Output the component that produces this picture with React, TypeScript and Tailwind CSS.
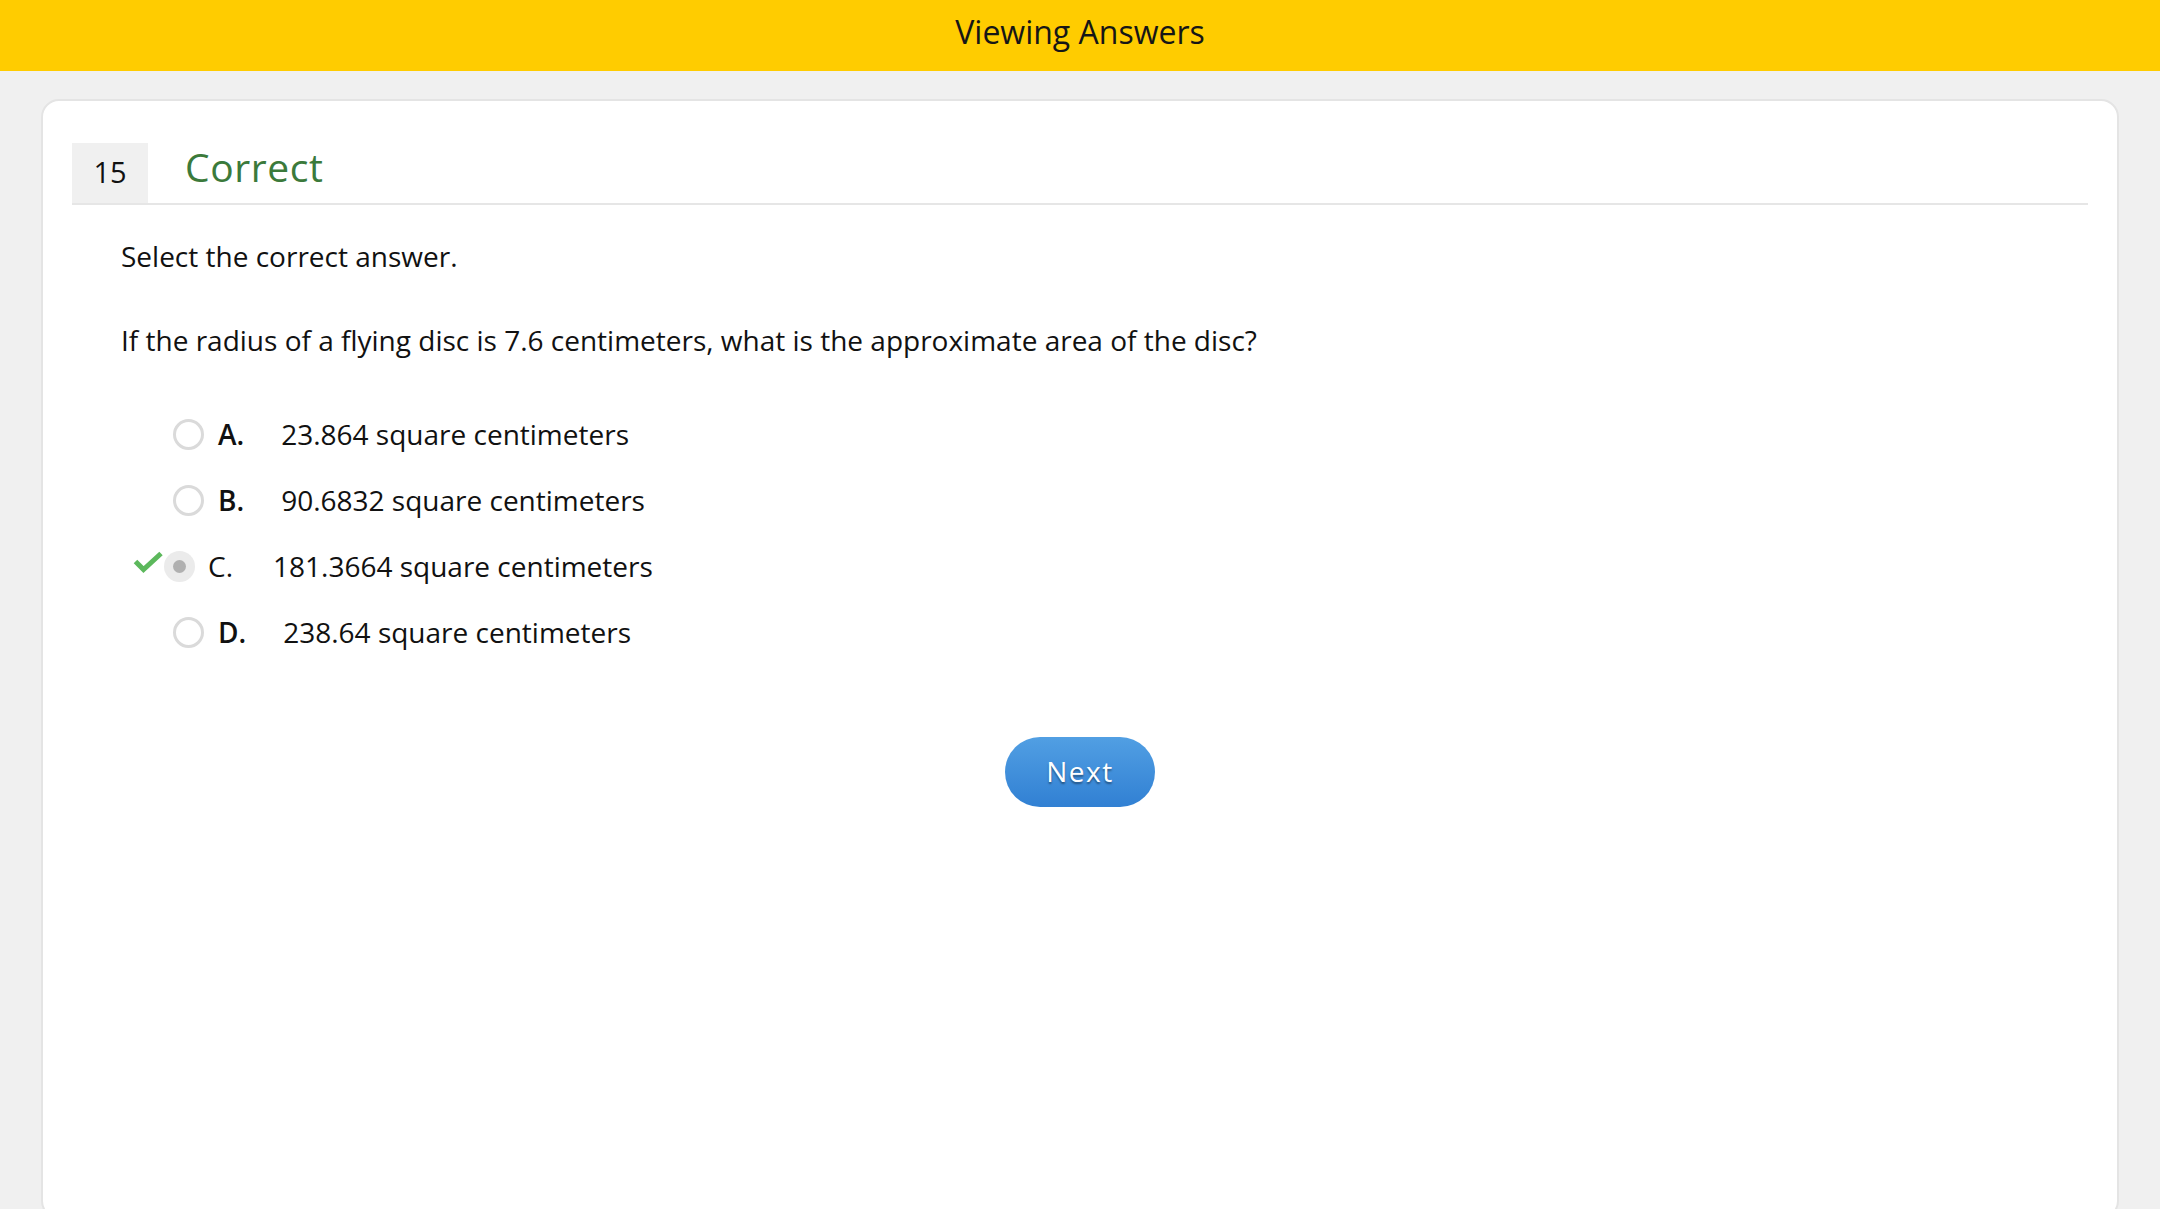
import React from "react";

const options = [
  { key: "A", text: "23.864 square centimeters", selected: false },
  { key: "B", text: "90.6832 square centimeters", selected: false },
  { key: "C", text: "181.3664 square centimeters", selected: true },
  { key: "D", text: "238.64 square centimeters", selected: false },
];

function Check() {
  return (
    <svg width="30" height="22" viewBox="0 0 30 22" className="shrink-0">
      <polyline
        points="2.5,10.5 10.5,18.5 28,2.5"
        fill="none"
        stroke="#5cb85c"
        strokeWidth="5"
        strokeLinecap="butt"
        strokeLinejoin="miter"
      />
    </svg>
  );
}

export default function App() {
  return (
    <div
      className="h-[1209px] overflow-hidden bg-[#f0f0f0] text-[#111]"
      style={{ fontFamily: '"Open Sans", "Noto Sans", sans-serif' }}
    >
      <div className="flex h-[71px] items-center justify-center bg-[#ffcc00] pb-[8px] text-[32px] text-[#161616]">
        Viewing Answers
      </div>

      <div className="mx-[41px] mt-[28px] h-[1120px] rounded-[18px] border-2 border-[#e4e4e4] bg-white px-[29px] pt-[42px]">
        <div className="flex items-stretch border-b-2 border-[#e6e6e6]">
          <div className="flex h-[60px] w-[76px] items-center justify-center bg-[#f0f0f0] pb-[4px] text-[29px] leading-none">
            15
          </div>
          <div className="ml-[37px] flex items-center pb-[13px] text-[39px] leading-none tracking-[0.6px] text-[#3b7a3b]">
            Correct
          </div>
        </div>

        <div className="mt-[32px] pl-[49px] text-[28px] leading-[38px]">
          Select the correct answer.
        </div>
        <div className="mt-[46px] pl-[49px] text-[28px] leading-[38px]">
          If the radius of a flying disc is 7.6 centimeters, what is the approximate area of the disc?
        </div>

        <div className="mt-[42px] flex flex-col">
          {options.map((o) =>
            o.selected ? (
              <div key={o.key} className="flex h-[66px] items-center pl-[61px] text-[28px]">
                <div className="-mt-[8px]">
                  <Check />
                </div>
                <div className="ml-[1px] flex h-[31px] w-[31px] items-center justify-center rounded-full bg-[#ebebeb]">
                  <div className="h-[13px] w-[13px] rounded-full bg-[#b0b0b0]" />
                </div>
                <span className="ml-[13px] font-normal">{o.key}.</span>
                <span className="ml-[40px]">{o.text}</span>
              </div>
            ) : (
              <div key={o.key} className="flex h-[66px] items-center pl-[101px] text-[28px]">
                <div className="h-[31px] w-[31px] rounded-full border-[3px] border-[#dadada] bg-white" />
                <span className="ml-[14px] font-semibold">{o.key}.</span>
                <span className="ml-[37px]">{o.text}</span>
              </div>
            )
          )}
        </div>

        <div className="mt-[72px] flex justify-center">
          <button className="flex h-[70px] w-[150px] items-center justify-center rounded-full bg-gradient-to-b from-[#519fe3] to-[#3180d3] pb-[2px] text-[28px] font-medium tracking-[1.5px] text-white [text-shadow:0_2px_2px_rgba(0,0,0,0.4)]">
            Next
          </button>
        </div>
      </div>
    </div>
  );
}
